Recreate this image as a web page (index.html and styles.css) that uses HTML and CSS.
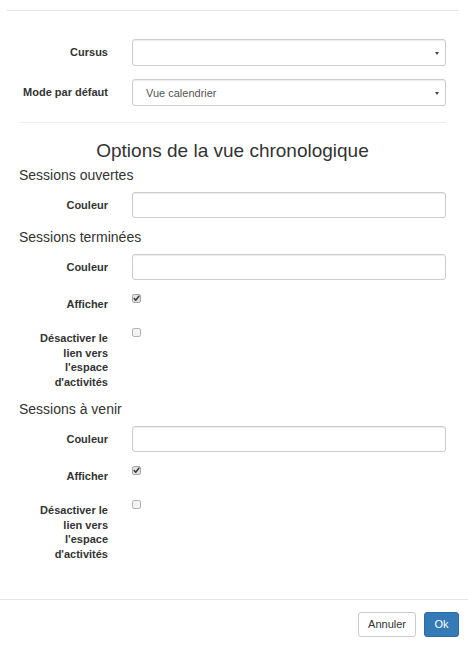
FILE: index.html
```html
<!DOCTYPE html>
<html lang="fr">
<head>
<meta charset="utf-8">
<title>Options</title>
<link rel="stylesheet" href="styles.css">
</head>
<body>
<div class="modal">
  <div class="modal-header"></div>
  <div class="modal-body">
    <div class="form-group field">
      <label class="control-label">Cursus</label>
      <div class="select-wrap"><select class="form-control"><option></option></select></div>
    </div>
    <div class="form-group field last-top">
      <label class="control-label">Mode par défaut</label>
      <div class="select-wrap"><select class="form-control"><option>Vue calendrier</option></select></div>
    </div>
    <hr class="sep">
    <h3 class="title">Options de la vue chronologique</h3>

    <h4 class="section first">Sessions ouvertes</h4>
    <div class="form-group field input-row">
      <label class="control-label">Couleur</label>
      <input class="form-control" type="text">
    </div>

    <h4 class="section">Sessions terminées</h4>
    <div class="form-group field input-row">
      <label class="control-label">Couleur</label>
      <input class="form-control" type="text">
    </div>
    <div class="form-group check-row short">
      <label class="control-label">Afficher</label>
      <span class="cb"><svg width="9" height="9" viewBox="0 0 9 9"><rect x=".5" y=".5" width="8" height="8" rx="1.6" fill="#e2e2e2" stroke="#a3a3a3"/><path d="M2.2 4.6 L3.7 6.3 L6.9 2.2" stroke="#3a3a3a" stroke-width="1.5" fill="none" stroke-linecap="round" stroke-linejoin="round"/></svg></span>
    </div>
    <div class="form-group check-row">
      <label class="control-label">Désactiver le lien vers l'espace d'activités</label>
      <span class="cb"><svg width="9" height="9" viewBox="0 0 9 9"><rect x=".5" y=".5" width="8" height="8" rx="1.6" fill="#f3f3f3" stroke="#b3b3b3"/></svg></span>
    </div>

    <h4 class="section">Sessions à venir</h4>
    <div class="form-group field input-row">
      <label class="control-label">Couleur</label>
      <input class="form-control" type="text">
    </div>
    <div class="form-group check-row short">
      <label class="control-label">Afficher</label>
      <span class="cb"><svg width="9" height="9" viewBox="0 0 9 9"><rect x=".5" y=".5" width="8" height="8" rx="1.6" fill="#e2e2e2" stroke="#a3a3a3"/><path d="M2.2 4.6 L3.7 6.3 L6.9 2.2" stroke="#3a3a3a" stroke-width="1.5" fill="none" stroke-linecap="round" stroke-linejoin="round"/></svg></span>
    </div>
    <div class="form-group check-row">
      <label class="control-label">Désactiver le lien vers l'espace d'activités</label>
      <span class="cb"><svg width="9" height="9" viewBox="0 0 9 9"><rect x=".5" y=".5" width="8" height="8" rx="1.6" fill="#f3f3f3" stroke="#b3b3b3"/></svg></span>
    </div>
  </div>
  <div class="modal-footer">
    <button class="btn btn-default" type="button">Annuler</button>
    <button class="btn btn-primary" type="button">Ok</button>
  </div>
</div>
</body>
</html>
```

FILE: styles.css
```css
html, body {
  margin: 0;
  padding: 0;
  background: #fff;
}
body {
  font-family: "Liberation Sans", Arial, sans-serif;
  font-size: 11px;
  color: #333;
  overflow: hidden;
}
.modal-header {
  height: 10px;
  margin: 0 9px 0 7px;
  border-bottom: 1px solid #e5e5e5;
}
.modal-body {
  padding: 28px 22px 26px 19px;
}
.form-group {
  display: grid;
  grid-template-columns: 89px 314px;
  column-gap: 24px;
  margin-bottom: 13px;
}
.field {
  align-items: center;
}
.control-label {
  display: block;
  text-align: right;
  font-weight: bold;
  line-height: 14.5px;
  padding-left: 2px;
}
.form-control {
  display: block;
  box-sizing: border-box;
  width: 314px;
  height: 27px;
  margin: 0;
  border: 1px solid #ccc;
  border-radius: 3px;
  background: #fff;
  box-shadow: inset 0 1px 1px rgba(0,0,0,.075);
  font-family: "Liberation Sans", Arial, sans-serif;
  font-size: 11px;
  color: #555;
  outline: none;
}
input.form-control {
  height: 26px;
  padding: 0 9px;
}
select.form-control {
  -webkit-appearance: none;
  appearance: none;
  padding: 0 20px 0 13px;
}
.select-wrap {
  position: relative;
}
.select-wrap::after {
  content: "";
  position: absolute;
  right: 7px;
  top: 50%;
  margin-top: -1px;
  border-left: 2px solid transparent;
  border-right: 2px solid transparent;
  border-top: 3px solid #444;
}
.input-row {
  margin-bottom: 11px;
}
.sep {
  margin: 16px 0 17px;
  border: 0;
  border-top: 1px solid #eee;
  height: 0;
}
.title {
  margin: 0;
  font-size: 19px;
  line-height: 21px;
  font-weight: normal;
  text-align: center;
}
.section {
  margin: 0 0 9px;
  font-size: 14px;
  line-height: 16px;
  font-weight: normal;
}
.section.first {
  margin-top: 6px;
}
.check-row {
  align-items: start;
  margin-bottom: 12px;
}
.check-row .control-label {
  padding-top: 6px;
}
.check-row.short {
  min-height: 22px;
}
.cb {
  display: block;
  width: 9px;
  height: 9px;
  margin-top: 3px;
}
.cb svg {
  display: block;
}
.modal-footer {
  border-top: 1px solid #e5e5e5;
  padding: 12px 9px 8px 0;
  display: flex;
  justify-content: flex-end;
  gap: 8px;
}
.btn {
  box-sizing: border-box;
  height: 25px;
  padding: 0 9px;
  border: 1px solid #ccc;
  border-radius: 3px;
  font-family: "Liberation Sans", Arial, sans-serif;
  font-size: 11px;
  line-height: 23px;
  margin: 0;
}
.btn-default {
  background: #fff;
  color: #333;
  border-color: #ccc;
}
.btn-primary {
  background: #337ab7;
  border-color: #2e6da4;
  color: #fff;
  width: 35px;
  padding: 0;
}
```
